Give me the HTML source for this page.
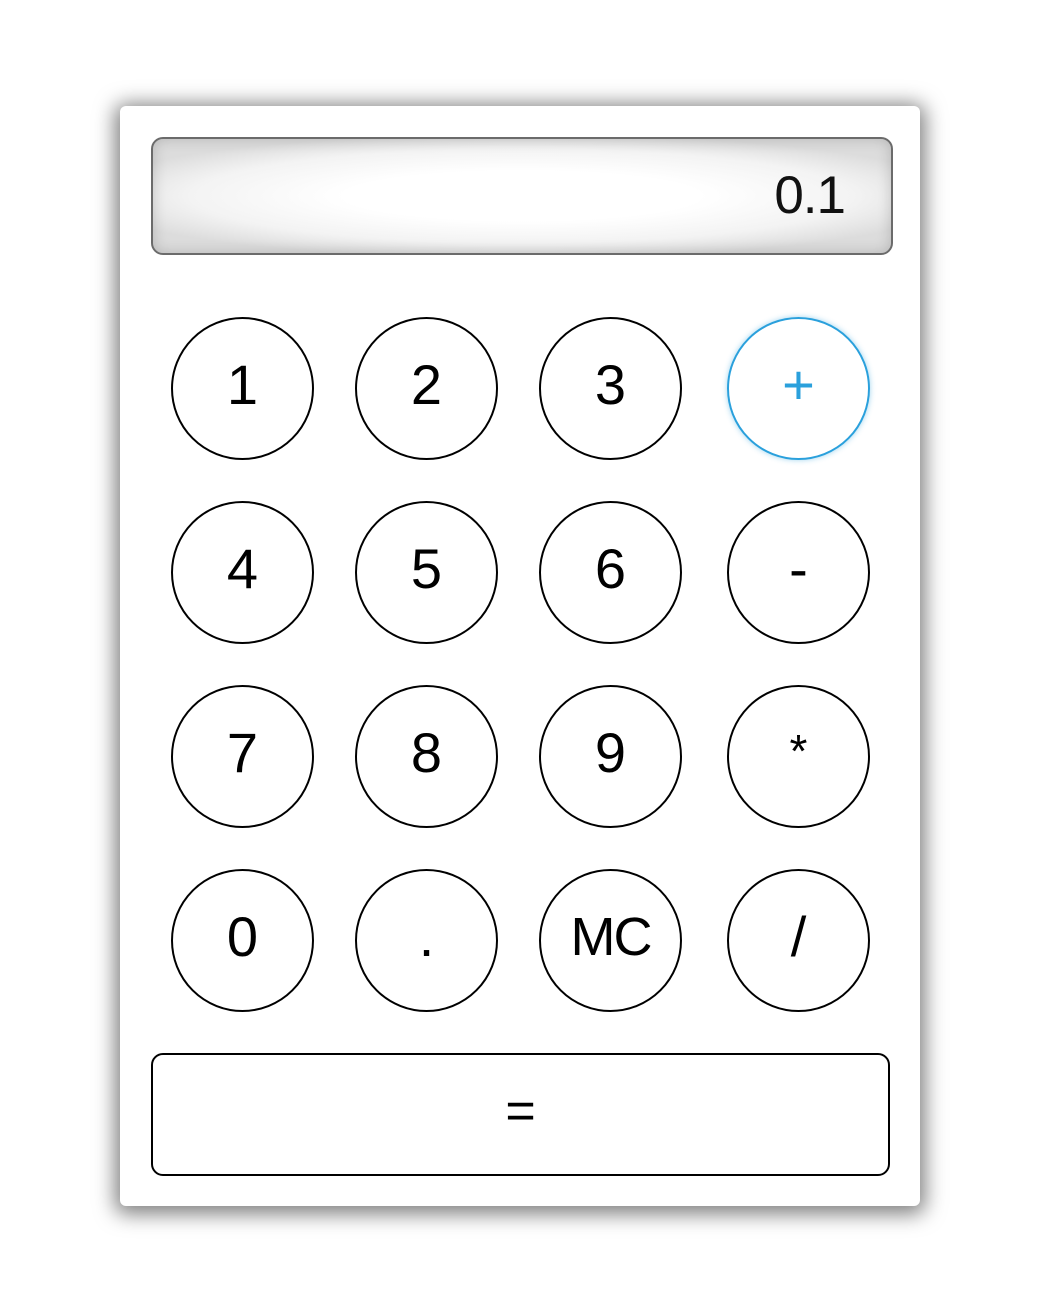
<!DOCTYPE html>
<html><head><meta charset="utf-8"><style>
html,body{margin:0;padding:0;width:1040px;height:1304px;background:#fff;overflow:hidden;font-family:"Liberation Sans",sans-serif;}
.card{position:absolute;left:120px;top:106px;width:800px;height:1100px;background:#fff;border-radius:6px;box-shadow:0 3px 20px 5px rgba(0,0,0,0.5);}
.disp{position:absolute;left:151px;top:137px;width:738px;height:114px;border:2px solid #6b6b6b;border-radius:12px;background:radial-gradient(ellipse 60% 55% at 50% 50%,#ffffff 40%,#f3f3f3 75%,#dcdcdc 100%);box-shadow:inset 0 0 14px rgba(0,0,0,0.18);}
.disp span{position:absolute;right:46px;top:30px;font-size:53px;line-height:53px;color:#111;letter-spacing:-1px;}
.b{position:absolute;width:139px;height:139px;border:2px solid #000;border-radius:50%;display:flex;align-items:center;justify-content:center;font-size:56px;line-height:56px;color:#000;box-sizing:content-box;}
.b>span{position:relative;top:-4px;}
.plus{border-color:#2aa0dc;color:#2aa0dc;box-shadow:0 0 6px rgba(42,160,220,0.45);}
.eq{position:absolute;left:151px;top:1053px;width:735px;height:119px;border:2px solid #000;border-radius:12px;display:flex;align-items:center;justify-content:center;font-size:52px;line-height:52px;}
.eq span{position:relative;top:-4px;}
</style></head><body>
<div class="card"></div>
<div class="disp"><span>0.1</span></div>
<div class="b" style="left:171px;top:317px"><span>1</span></div>
<div class="b" style="left:355px;top:317px"><span>2</span></div>
<div class="b" style="left:539px;top:317px"><span>3</span></div>
<div class="b plus" style="left:727px;top:317px"><span>+</span></div>
<div class="b" style="left:171px;top:501px"><span>4</span></div>
<div class="b" style="left:355px;top:501px"><span>5</span></div>
<div class="b" style="left:539px;top:501px"><span>6</span></div>
<div class="b" style="left:727px;top:501px"><span>-</span></div>
<div class="b" style="left:171px;top:685px"><span>7</span></div>
<div class="b" style="left:355px;top:685px"><span>8</span></div>
<div class="b" style="left:539px;top:685px"><span>9</span></div>
<div class="b" style="left:727px;top:685px;align-items:flex-start"><span style="top:0;margin-top:36px;font-size:46px">*</span></div>
<div class="b" style="left:171px;top:869px"><span>0</span></div>
<div class="b" style="left:355px;top:869px"><span>.</span></div>
<div class="b" style="left:539px;top:869px;font-size:54px;letter-spacing:-2px"><span>MC</span></div>
<div class="b" style="left:727px;top:869px"><span>/</span></div>
<div class="eq"><span>=</span></div>
</body></html>
